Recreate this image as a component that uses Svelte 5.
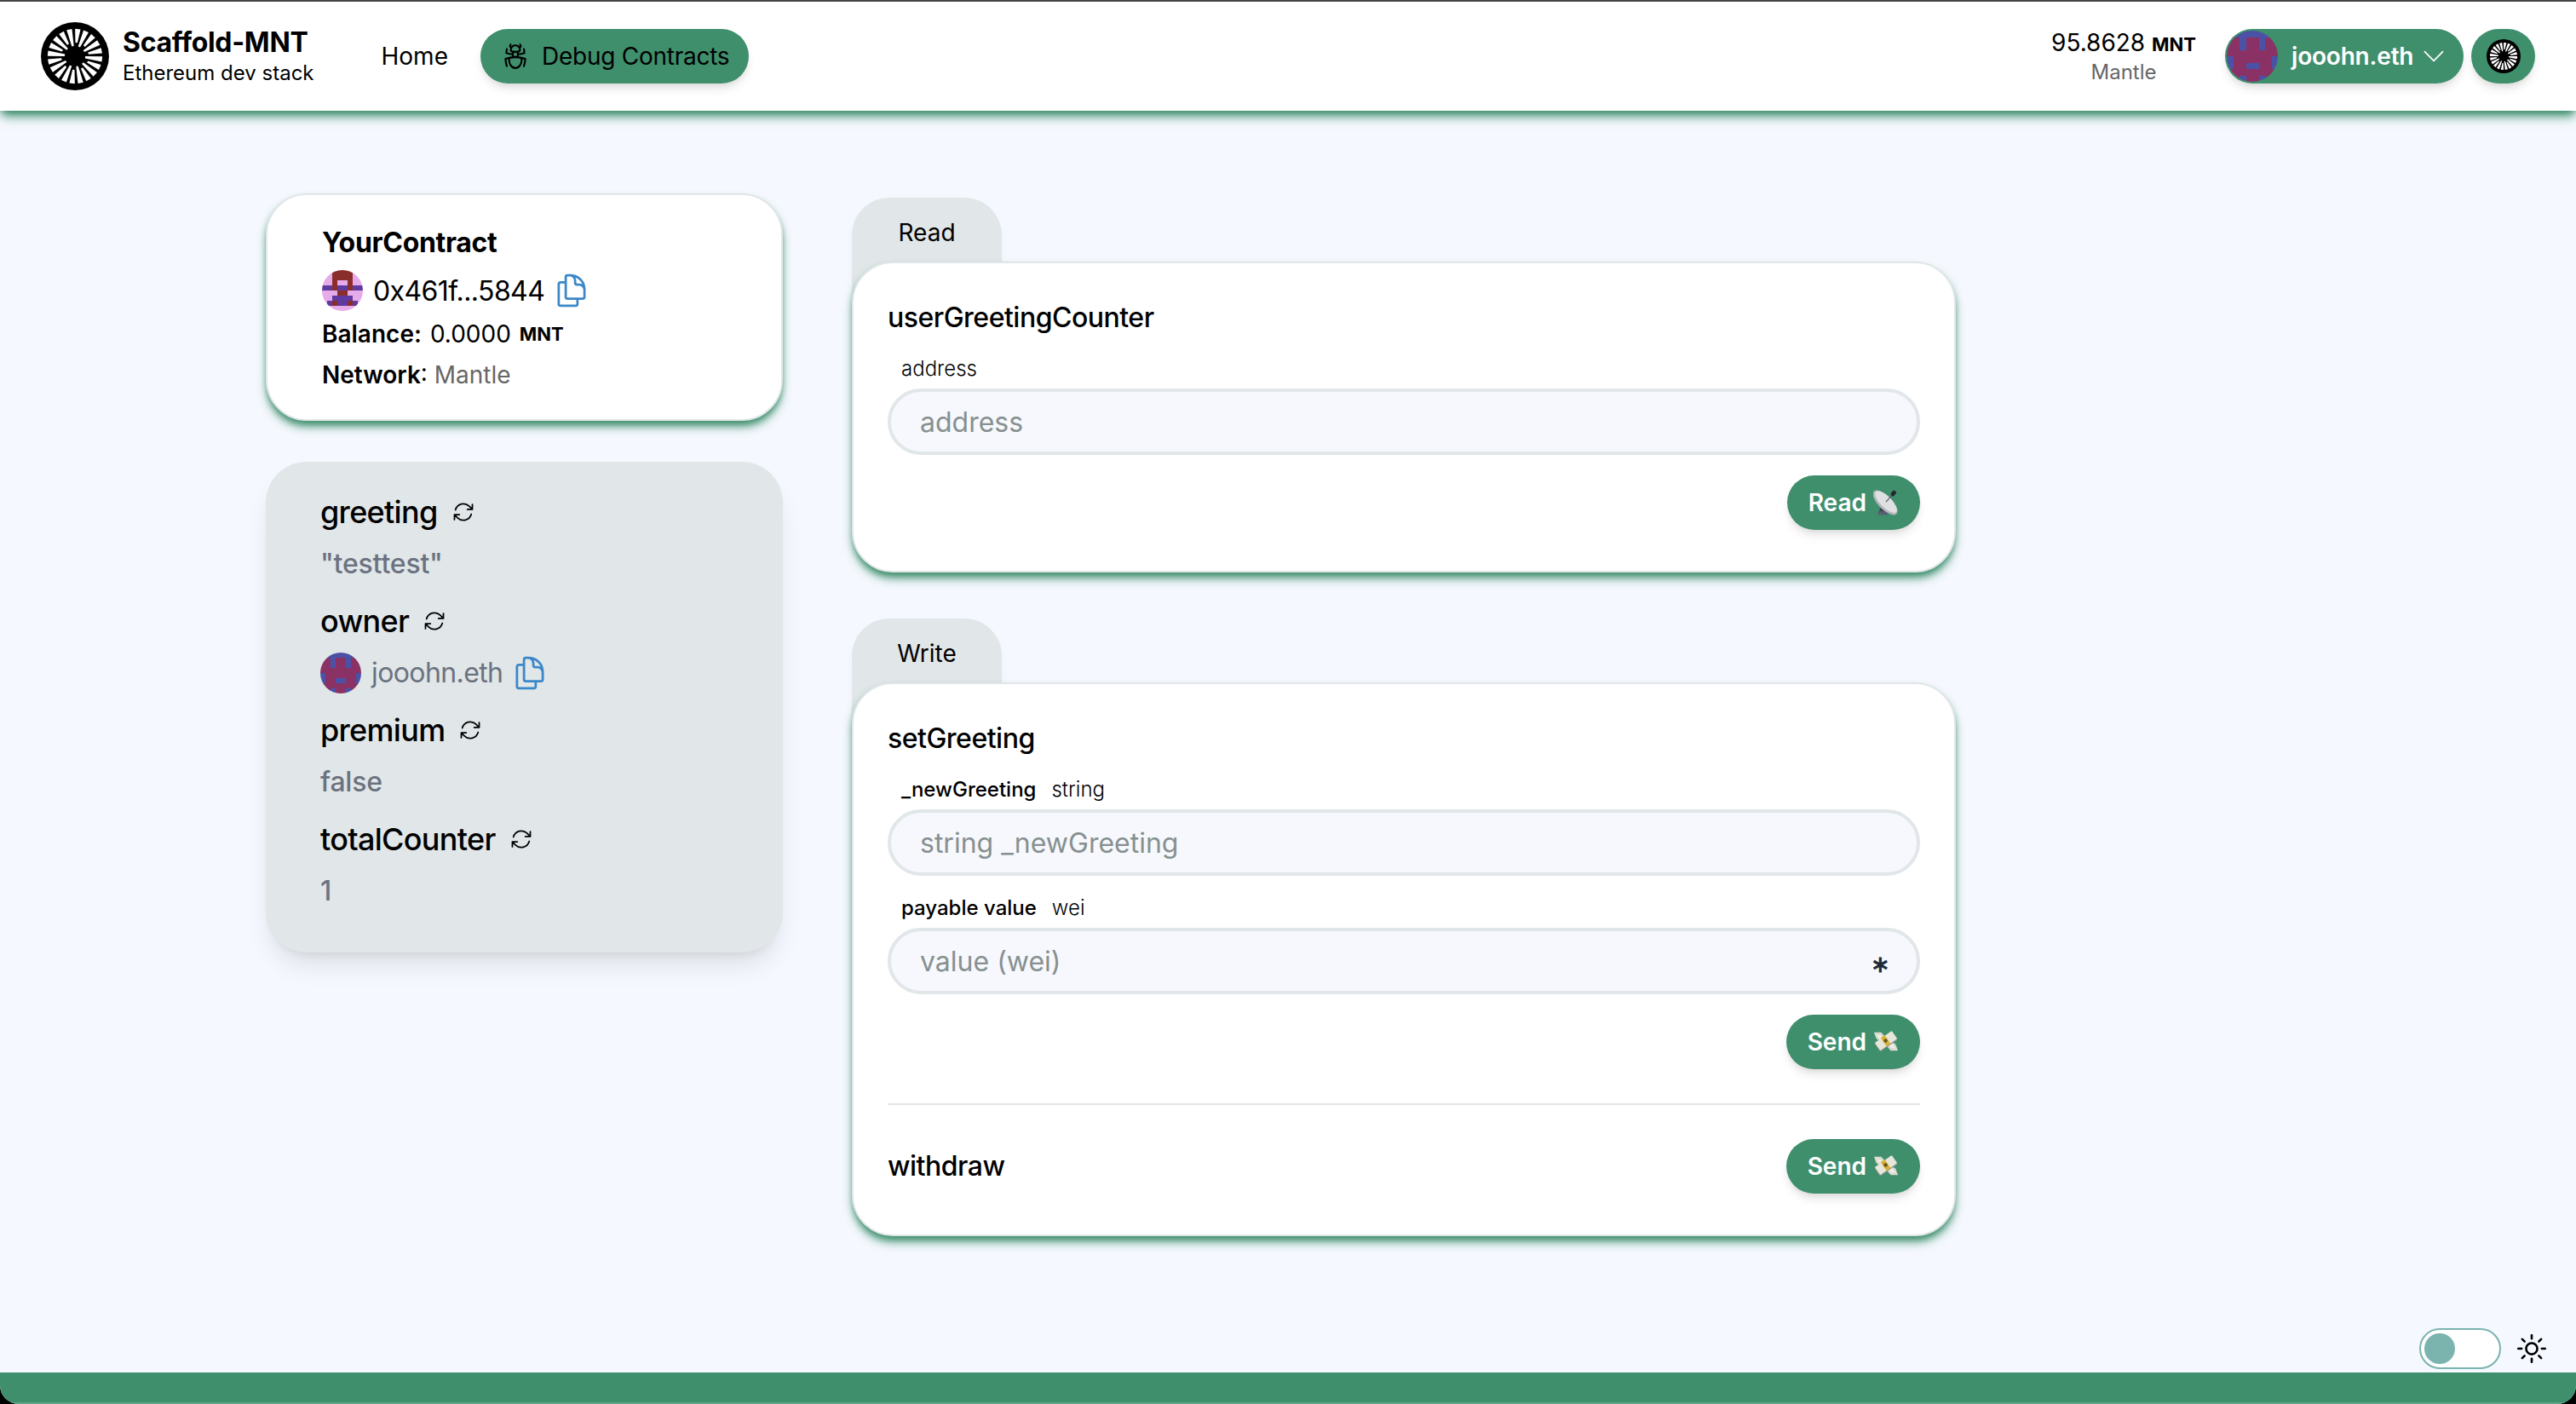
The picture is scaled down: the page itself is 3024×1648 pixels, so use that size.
<script>
  // spokes of the round logo
  const spokes = Array.from({ length: 20 }, (_, i) => i * 18);

  const ownerCells = [
    "BBBBBBBB",
    "RRBRRBRR",
    "RRBRRBRR",
    "RRRRRRRR",
    "BRRRRRRB",
    "BRRBBRRB",
    "RRRRRRRR",
    "RRBRRBRR"
  ];
  const contractCells = [
    "PPBBBBPP",
    "PPBBBBPP",
    "PPBPPBPP",
    "VVBVVBVV",
    "PPPBBPPP",
    "PPVVVVPP",
    "PVBVVBVP",
    "PPPPPPPP"
  ];
  const ownerColors = { B: "#4b52a6", R: "#8a3266" };
  const contractColors = { P: "#e6abe9", B: "#8a2e2b", V: "#5f3a9f" };

  const readFields = [{ name: "greeting", value: '"testtest"' }];
</script>

{#snippet logo(size)}
  <svg class="logo" width={size} height={size} viewBox="0 0 80 80">
    <circle cx="40" cy="40" r="40" fill="#000" />
    {#each spokes as a, i}
      <polygon points="38.8,{i % 2 ? 28 : 24} 41.2,{i % 2 ? 28 : 24} 43.2,8 36.8,8" fill="#fff" transform="rotate({a + 6} 40 40)" />
    {/each}
    <circle cx="40" cy="40" r="9" fill="#000" />
  </svg>
{/snippet}

{#snippet blockie(cells, colors, size)}
  <svg class="blockie" width={size} height={size} viewBox="0 0 8 8" shape-rendering="crispEdges">
    {#each cells as row, y}
      {#each row.split("") as c, x}
        <rect {x} {y} width="1.02" height="1.02" fill={colors[c]} />
      {/each}
    {/each}
  </svg>
{/snippet}

{#snippet copyIcon()}
  <svg class="copy" viewBox="0 0 24 24" fill="none" stroke="currentColor" stroke-width="1.5" stroke-linecap="round" stroke-linejoin="round">
    <path d="M15.75 17.25v3.375c0 .621-.504 1.125-1.125 1.125h-9.75a1.125 1.125 0 01-1.125-1.125V7.875c0-.621.504-1.125 1.125-1.125H6.75a9.06 9.06 0 011.5.124m7.5 10.376h3.375c.621 0 1.125-.504 1.125-1.125V11.25c0-4.46-3.243-8.161-7.5-8.876a9.06 9.06 0 00-1.5-.124H9.375c-.621 0-1.125.504-1.125 1.125v3.5m7.5 10.375H9.375a1.125 1.125 0 01-1.125-1.125v-9.25m12 6.625v-1.875a3.375 3.375 0 00-3.375-3.375h-1.5a1.125 1.125 0 01-1.125-1.125v-1.5a3.375 3.375 0 00-3.375-3.375H9.75" />
  </svg>
{/snippet}

{#snippet refresh()}
  <svg class="refresh" viewBox="0 0 24 24" fill="none" stroke="currentColor" stroke-width="1.5" stroke-linecap="round" stroke-linejoin="round">
    <path d="M16.023 9.348h4.992v-.001M2.985 19.644v-4.992m0 0h4.992m-4.993 0l3.181 3.183a8.25 8.25 0 0013.803-3.7M4.031 9.865a8.25 8.25 0 0113.803-3.7l3.181 3.182m0-4.991v4.99" />
  </svg>
{/snippet}

{#snippet dish()}
  <svg class="emoji" viewBox="0 0 32 32">
    <path d="M10 18l-3 10h10l-2-10z" fill="#3d4350" />
    <rect x="6" y="27" width="12" height="4.5" rx="1" fill="#59606e" />
    <ellipse cx="15" cy="16" rx="8.5" ry="20" transform="rotate(-45 15 16)" fill="#b4b7ba" />
    <ellipse cx="16" cy="15" rx="7" ry="18" transform="rotate(-45 16 15)" fill="#dfe0e2" />
    <path d="M16 15l9-10" stroke="#55595f" stroke-width="1.3" />
    <rect x="23" y="0.5" width="5" height="7" rx="1.5" transform="rotate(40 25 4)" fill="#23262b" />
  </svg>
{/snippet}

{#snippet money()}
  <svg class="emoji" viewBox="0 0 32 32">
    <path d="M1 4l9 0 7 8-7 4-6-4z" fill="#dcdcd2" />
    <path d="M4 7l6 1 3 4-4 1z" fill="#f0efe8" />
    <path d="M31 27l-9 0-7-8 7-4 6 4z" fill="#dcdcd2" />
    <path d="M28 24l-6-1-3-4 4-1z" fill="#f0efe8" />
    <rect x="3" y="10" width="26" height="12" rx="1" transform="rotate(-35 16 16)" fill="#8d9184" />
    <rect x="3" y="8.5" width="26" height="12" rx="1" transform="rotate(-35 16 14.5)" fill="#e6e6da" />
    <rect x="12.5" y="8" width="6" height="13" transform="rotate(-35 15.5 14.5)" fill="#d9b233" />
    <circle cx="15.5" cy="14.5" r="2.4" fill="#6b5a1e" />
  </svg>
{/snippet}

<div class="page">
  <header class="topbar">
    <div class="brand">
      {@render logo(80)}
      <div class="brand-text">
        <strong>Scaffold-MNT</strong>
        <span>Ethereum dev stack</span>
      </div>
    </div>
    <nav class="links">
      <a href="/">Home</a>
      <a href="/debug" class="active">
        <svg class="bug" viewBox="0 0 24 24" fill="none" stroke="currentColor" stroke-width="1.5" stroke-linecap="round" stroke-linejoin="round">
          <path d="M12 12.75c1.148 0 2.278.08 3.383.237 1.037.146 1.866.966 1.866 2.013 0 3.728-2.35 6.75-5.25 6.75S6.75 18.728 6.75 15c0-1.046.83-1.867 1.866-2.013A24.204 24.204 0 0112 12.75zm0 0c2.883 0 5.647.508 8.207 1.44a23.91 23.91 0 01-1.152 6.06M12 12.75c-2.883 0-5.647.508-8.208 1.44.125 2.104.52 4.136 1.153 6.06M12 12.75a2.25 2.25 0 002.248-2.354M12 12.75a2.25 2.25 0 01-2.248-2.354M12 8.25c.995 0 1.971-.08 2.922-.236.403-.066.74-.358.795-.762a3.778 3.778 0 00-.399-2.25M12 8.25c-.995 0-1.97-.08-2.922-.236-.402-.066-.74-.358-.795-.762a3.734 3.734 0 01.4-2.253M12 8.25a2.25 2.25 0 00-2.248 2.146M12 8.25a2.25 2.25 0 012.248 2.146M8.683 5a6.032 6.032 0 01-1.155-1.002c.07-.63.27-1.222.574-1.747m.581 2.749A3.75 3.75 0 0115.318 5m0 0c.427-.283.815-.62 1.155-.999a4.471 4.471 0 00-.575-1.752M4.921 6a24.048 24.048 0 00-.392 3.314c1.668.546 3.416.914 5.223 1.082M19.08 6c.205 1.08.337 2.187.392 3.314a23.882 23.882 0 01-5.223 1.082" />
        </svg>
        <span>Debug Contracts</span>
      </a>
    </nav>
    <div class="wallet">
      <div class="balance">
        <div><span>95.8628</span> <b>MNT</b></div>
        <small>Mantle</small>
      </div>
      <button class="account">
        {@render blockie(ownerCells, ownerColors, 60)}
        <span>jooohn.eth</span>
        <svg class="chevron" viewBox="0 0 24 24" fill="none" stroke="currentColor" stroke-width="1.2" stroke-linecap="round" stroke-linejoin="round">
          <path d="M19.5 8.25l-7.5 7.5-7.5-7.5" />
        </svg>
      </button>
      <button class="network">{@render logo(40)}</button>
    </div>
  </header>

  <main class="content">
    <aside class="left">
      <section class="info">
        <h2>YourContract</h2>
        <div class="addr">
          {@render blockie(contractCells, contractColors, 48)}
          <span>0x461f...5844</span>
          {@render copyIcon()}
        </div>
        <div class="line balance-line">
          <b>Balance:</b>
          <span>0.0000</span>
          <b class="unit">MNT</b>
        </div>
        <div class="line network-line"><b>Network</b>: <span class="muted">Mantle</span></div>
      </section>

      <section class="vars">
        {#each readFields as f}
          <div class="var">
            <h3>{f.name} {@render refresh()}</h3>
            <div class="value">{f.value}</div>
          </div>
        {/each}
        <div class="var">
          <h3>owner {@render refresh()}</h3>
          <div class="value owner">
            {@render blockie(ownerCells, ownerColors, 48)}
            <span>jooohn.eth</span>
            {@render copyIcon()}
          </div>
        </div>
        <div class="var">
          <h3>premium {@render refresh()}</h3>
          <div class="value">false</div>
        </div>
        <div class="var">
          <h3>totalCounter {@render refresh()}</h3>
          <div class="value">1</div>
        </div>
      </section>
    </aside>

    <div class="right">
      <div class="panel">
        <div class="tab">Read</div>
        <section class="card">
          <h4>userGreetingCounter</h4>
          <label class="field-label" for="addr"><span>address</span></label>
          <div class="input"><input id="addr" placeholder="address" /></div>
          <div class="actions">
            <button class="btn read">Read {@render dish()}</button>
          </div>
        </section>
      </div>

      <div class="panel">
        <div class="tab">Write</div>
        <section class="card">
          <h4>setGreeting</h4>
          <label class="field-label" for="greet"><b>_newGreeting</b><span>string</span></label>
          <div class="input"><input id="greet" placeholder="string _newGreeting" /></div>
          <label class="field-label second" for="wei"><b>payable value</b><span>wei</span></label>
          <div class="input">
            <input id="wei" placeholder="value (wei)" />
            <span class="star">∗</span>
          </div>
          <div class="actions">
            <button class="btn">Send {@render money()}</button>
          </div>
          <hr />
          <div class="row">
            <h4>withdraw</h4>
            <button class="btn">Send {@render money()}</button>
          </div>
        </section>
      </div>
    </div>
  </main>

  <div class="theme">
    <span class="toggle"><i></i></span>
    <svg class="sun" viewBox="0 0 24 24" fill="none" stroke="#000" stroke-width="1.5" stroke-linecap="round" stroke-linejoin="round">
      <path d="M12 3v2.25m6.364.386l-1.591 1.591M21 12h-2.25m-.386 6.364l-1.591-1.591M12 18.75V21m-4.773-4.227l-1.591 1.591M5.25 12H3m4.227-4.773L5.636 5.636M15.75 12a3.75 3.75 0 11-7.5 0 3.75 3.75 0 017.5 0z" />
    </svg>
  </div>
  <footer class="foot"></footer>
</div>

<style>
  :global(body) {
    margin: 0;
    background: #000;
  }

  .page {
    height: 1648px;
    display: flex;
    flex-direction: column;
    overflow: hidden;
    box-sizing: border-box;
    border-top: 2px solid #444;
    border-radius: 0 0 22px 22px;
    background: #f5f8fe;
    color: #000;
    font-family: Inter, "Liberation Sans", sans-serif;
  }

  .topbar {
    height: 128px;
    flex: none;
    display: flex;
    align-items: center;
    padding: 0 48px;
    background: #fff;
    box-shadow: 0 8px 12px -2px #3f8f6d, 0 4px 8px -4px #3f8f6d;
    position: relative;
    z-index: 2;
  }

  .brand {
    display: flex;
    align-items: center;
    gap: 16px;
  }

  .logo {
    display: block;
    flex: none;
  }

  .brand-text {
    display: flex;
    flex-direction: column;
  }

  .brand-text strong {
    font-size: 32px;
    line-height: 40px;
    font-weight: 700;
    letter-spacing: -0.3px;
  }

  .brand-text span {
    font-size: 24px;
    line-height: 32px;
  }

  .links {
    display: flex;
    align-items: center;
    gap: 14px;
    margin-left: 55px;
  }

  .links a {
    display: flex;
    align-items: center;
    gap: 15px;
    height: 64px;
    padding: 0 24px;
    border-radius: 32px;
    color: #000;
    text-decoration: none;
    font-size: 28px;
  }

  .links a.active {
    padding: 0 23px 0 24px;
    gap: 14px;
    letter-spacing: -0.25px;
    background: #3f8f6d;
    box-shadow: 0 8px 12px -2px rgba(0, 0, 0, 0.1), 0 4px 8px -4px rgba(0, 0, 0, 0.1);
  }

  .bug {
    width: 34px;
    height: 34px;
    flex: none;
  }

  .wallet {
    margin-left: auto;
    display: flex;
    align-items: center;
  }

  .balance {
    text-align: center;
    margin-right: 34px;
    font-size: 28px;
    line-height: 36px;
  }

  .balance b {
    font-size: 22px;
    font-weight: 700;
  }

  .balance small {
    display: block;
    font-size: 24px;
    line-height: 30px;
    color: #666;
  }

  .account,
  .network {
    display: flex;
    align-items: center;
    justify-content: center;
    height: 64px;
    border: 0;
    border-radius: 32px;
    background: #3f8f6d;
    color: #fff;
    font-family: inherit;
    box-shadow: 0 8px 12px -2px rgba(0, 0, 0, 0.1), 0 4px 8px -4px rgba(0, 0, 0, 0.1);
  }

  .account {
    width: 280px;
    padding: 0 14px 0 2px;
    justify-content: flex-start;
    font-size: 28px;
    font-weight: 600;
    letter-spacing: -0.2px;
  }

  .blockie {
    display: block;
    flex: none;
    border-radius: 50%;
  }

  .account span {
    margin-left: 16px;
  }

  .chevron {
    width: 34px;
    height: 34px;
    margin-left: 7px;
    flex: none;
  }

  .network {
    width: 75px;
    margin-left: 9px;
    padding: 0;
  }

  .content {
    flex: 1;
    display: grid;
    grid-template-columns: 607px 1296px;
    column-gap: 81px;
    align-items: start;
    padding: 97px 0 0 312px;
  }

  .left {
    display: flex;
    flex-direction: column;
    gap: 48px;
  }

  .info {
    height: 267px;
    box-sizing: border-box;
    padding: 36px 64px 0;
    background: #fff;
    border: 2px solid #e1e6e8;
    border-radius: 48px;
    box-shadow: 0 8px 12px -2px #3f8f6d, 0 4px 8px -4px #3f8f6d;
  }

  h2 {
    margin: 0;
    font-size: 32px;
    line-height: 40px;
    font-weight: 700;
    letter-spacing: -0.3px;
  }

  .addr {
    display: flex;
    align-items: center;
    margin-top: 12px;
    height: 48px;
    font-size: 32px;
    letter-spacing: -0.6px;
  }

  .addr span {
    margin-left: 12px;
  }

  .copy {
    width: 44px;
    height: 44px;
    margin-left: 10px;
    flex: none;
    color: #3b88c8;
  }

  .line {
    font-size: 28px;
    line-height: 36px;
  }

  .line b {
    font-weight: 600;
  }

  .balance-line {
    margin-top: 9px;
    display: flex;
    align-items: center;
    gap: 10px;
  }

  .balance-line .unit {
    font-size: 22px;
    font-weight: 700;
  }

  .network-line {
    margin-top: 12px;
  }

  .muted {
    color: #666;
  }

  .vars {
    height: 576px;
    box-sizing: border-box;
    padding: 34px 64px 0;
    background: #e1e6e8;
    border-radius: 48px;
    box-shadow: 0 20px 30px -6px rgba(0, 0, 0, 0.1), 0 8px 12px -8px rgba(0, 0, 0, 0.1);
  }

  .var {
    height: 128px;
  }

  h3 {
    display: flex;
    align-items: center;
    gap: 16px;
    margin: 0;
    font-size: 36px;
    line-height: 50px;
    font-weight: 500;
    letter-spacing: -0.7px;
  }

  .refresh {
    width: 28px;
    height: 28px;
    flex: none;
  }

  .value {
    margin-top: 12px;
    height: 48px;
    line-height: 48px;
    font-size: 32px;
    font-weight: 500;
    color: #6b7280;
    letter-spacing: -0.2px;
  }

  .value.owner {
    display: flex;
    align-items: center;
    font-weight: 400;
    letter-spacing: -0.6px;
  }

  .owner span {
    margin-left: 12px;
  }

  .owner .copy {
    margin-left: 10px;
  }

  .right {
    display: flex;
    flex-direction: column;
    gap: 54px;
    padding-top: 5px;
  }

  .tab {
    box-sizing: border-box;
    width: 176px;
    height: 160px;
    margin-bottom: -85px;
    padding-top: 22px;
    text-align: center;
    font-size: 28px;
    line-height: 38px;
    background: #e1e6e8;
    border-radius: 44px;
    box-shadow: 0 8px 12px -2px rgba(0, 0, 0, 0.05);
  }

  .card {
    position: relative;
    padding: 40px;
    background: #fff;
    border: 2px solid #e1e6e8;
    border-radius: 48px;
    box-shadow: 0 8px 12px -2px #3f8f6d, 0 4px 8px -4px #3f8f6d;
  }

  h4 {
    margin: 0;
    font-size: 32px;
    line-height: 48px;
    font-weight: 500;
    letter-spacing: -0.5px;
  }

  .field-label {
    display: flex;
    gap: 18px;
    margin: 18px 0 5px 16px;
    font-size: 24px;
    line-height: 36px;
  }

  .field-label.second {
    margin-top: 20px;
  }

  .field-label span {
    font-weight: 300;
  }

  .field-label b {
    font-weight: 500;
  }

  .input {
    display: flex;
    align-items: center;
    height: 78px;
    box-sizing: border-box;
    padding: 0 34px;
    background: #f6f8fd;
    border: 4px solid #e1e6e8;
    border-radius: 39px;
  }

  .input input {
    flex: 1;
    min-width: 0;
    border: 0;
    outline: 0;
    padding: 0;
    background: transparent;
    font-family: inherit;
    font-size: 32px;
  }

  .input input::placeholder {
    color: #87908f;
    opacity: 1;
  }

  .star {
    font-size: 27px;
    font-weight: 700;
    color: #1f2937;
    line-height: 1;
    padding-top: 6px;
    margin-right: -3px;
  }

  .actions {
    display: flex;
    justify-content: flex-end;
    margin-top: 24px;
  }

  .read {
    margin-bottom: 8px;
  }

  .btn {
    display: flex;
    align-items: center;
    gap: 8px;
    height: 64px;
    padding: 0 25px;
    border: 0;
    border-radius: 32px;
    background: #3f8f6d;
    color: #fff;
    font-family: inherit;
    font-size: 28px;
    font-weight: 600;
    box-shadow: 0 8px 12px -2px rgba(0, 0, 0, 0.1), 0 4px 8px -4px rgba(0, 0, 0, 0.1);
  }

  .emoji {
    width: 30px;
    height: 30px;
    flex: none;
  }

  hr {
    height: 2px;
    margin: 40px 0;
    border: 0;
    background: #e1e6e8;
  }

  .row {
    display: flex;
    align-items: center;
    justify-content: space-between;
    margin-bottom: 8px;
  }

  .theme {
    flex: none;
    display: flex;
    align-items: center;
    justify-content: flex-end;
    gap: 15px;
    height: 48px;
    padding: 0 31px 4px 0;
  }

  .toggle {
    box-sizing: border-box;
    width: 96px;
    height: 48px;
    padding: 4px;
    background: #fff;
    border: 2px solid #7bb3ae;
    border-radius: 24px;
  }

  .toggle i {
    display: block;
    width: 36px;
    height: 36px;
    border-radius: 50%;
    background: #7bb3ae;
  }

  .sun {
    width: 42px;
    height: 42px;
  }

  .foot {
    flex: none;
    height: 37px;
    box-sizing: border-box;
    background: #3f8f6d;
    border-bottom: 2px solid #5fa388;
  }
</style>
